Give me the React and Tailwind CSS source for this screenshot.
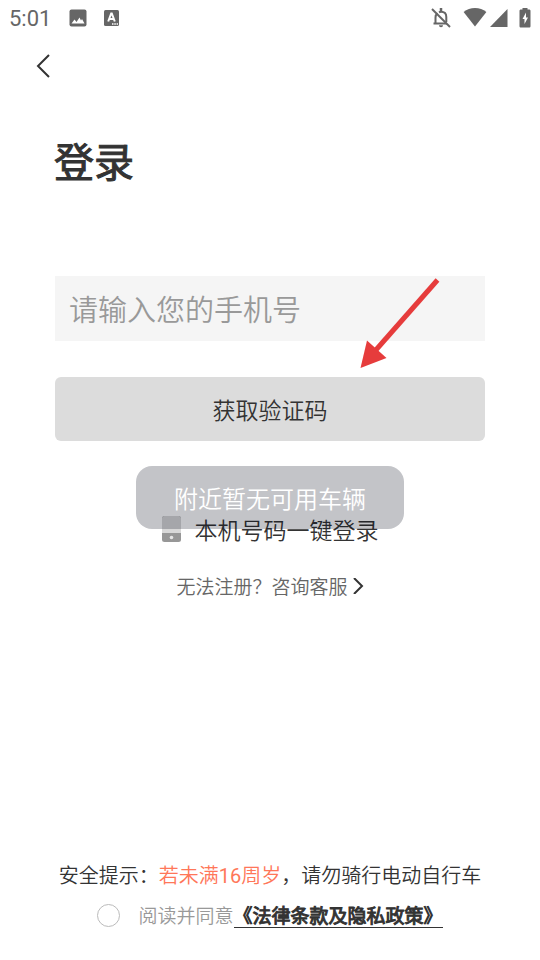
import { useState } from "react";

function StatusBar() {
  return (
    <div className="flex h-9 items-center justify-between px-[9px] text-[#666666]">
      <div className="flex items-center">
        <span className="w-[60px] pt-0.5 font-['Roboto',sans-serif] text-[22px] leading-6">5:01</span>
        <svg className="h-[18px] w-[18px]" viewBox="0 0 18 18" aria-hidden="true">
          <rect width="17" height="17" x=".5" y=".5" rx="2" fill="currentColor" />
          <path d="M2.500 14.500l3-4 2 2.500 3-4.500 1.500 3 1-1.500 2.500 4.500z" fill="#fff" />
        </svg>
        <svg className="ml-[17px] h-[18px] w-[15px]" viewBox="0 0 15 18" aria-hidden="true">
          <rect width="15" height="16" y="1" rx="1.500" fill="currentColor" />
          <path d="M4.200 12.500l3-8h.6l3 8M5.500 10h4" fill="none" stroke="#fff" strokeWidth="2" />
          <path d="M8 15h1.500M10.300 15h1.500M12.600 15H14" stroke="#fff" strokeWidth="1.400" />
        </svg>
      </div>
      <div className="flex items-center">
        <svg className="h-5 w-5" viewBox="0 0 20 20" fill="none" stroke="currentColor" aria-hidden="true">
          <path d="M4.500 15.200V9.500c0-2 .7-3.400 2-4.300M8 4.300c.5-.3 1.200-.5 2-.5 3.200 0 5.300 2 5.300 5.200v5M2.500 15.500h13.500" strokeWidth="2" />
          <path d="M10 0v4" strokeWidth="2.500" />
          <path d="M8 17.300h4c0 1.200-.8 2-2 2s-2-.8-2-2z" fill="currentColor" stroke="none" />
          <path d="M1 1l18 18" strokeWidth="2" />
        </svg>
        <svg className="ml-3 h-5 w-6" viewBox="0 0 24 20" fill="currentColor" aria-hidden="true">
          <path d="M.6 4C3.800 1.400 7.700 0 12 0s8.200 1.400 11.400 4L12 18.500z" />
        </svg>
        <svg className="ml-0.5 h-5 w-5" viewBox="0 0 20 20" fill="currentColor" aria-hidden="true">
          <path d="M18.500 1v18H1z" />
        </svg>
        <svg className="ml-2.5 h-5 w-3" viewBox="0 0 12 20" aria-hidden="true">
          <path d="M3.500 0h5v1.500H10c1 0 1.500.5 1.500 1.500v15c0 1-.5 1.500-1.500 1.500H2c-1 0-1.500-.5-1.500-1.500V3C.5 2 1 1.500 2 1.500h1.500z" fill="currentColor" />
          <path d="M7 4.500L3.500 11H5.500v5L9 9.500H7z" fill="#fff" />
        </svg>
      </div>
    </div>
  );
}

function Chevron({ className, d, viewBox }) {
  return (
    <svg className={className} viewBox={viewBox} fill="none" stroke="#333333" strokeWidth="2" aria-hidden="true">
      <path d={d} />
    </svg>
  );
}

function PhoneIcon() {
  return (
    <svg className="h-[26px] w-[19px]" viewBox="0 0 19 26" aria-hidden="true">
      <rect width="19" height="26" rx="2.500" fill="#979797" />
      <path d="M0 17V2.500C0 1 1 0 2.500 0h14C18 0 19 1 19 2.500V17z" fill="#d8d8d8" />
      <circle cx="9.500" cy="21.500" r="1.800" fill="#e5e5e5" />
    </svg>
  );
}

export default function App() {
  const [phone, setPhone] = useState("");
  const [agreed, setAgreed] = useState(false);

  const handleSubmit = (e) => {
    e.preventDefault();
  };

  return (
    <div className="flex min-h-screen flex-col bg-white font-['Noto_Sans_CJK_SC',sans-serif] text-[#333333]">
      <StatusBar />

      <header className="flex h-[60px] items-center px-[27px]">
        <button type="button" aria-label="返回" className="flex h-8 w-8 items-center justify-center">
          <Chevron className="h-6 w-4" viewBox="0 0 16 24" d="M14 1L3 12l11 11" />
        </button>
      </header>

      <main className="px-[55px] pt-[34px] font-[350]">
        <h1 className="-ml-px text-[40px] font-normal leading-[60px] [-webkit-text-stroke:1px]">登录</h1>

        <form onSubmit={handleSubmit} className="relative pt-[86px]">
          <input
            type="tel"
            aria-label="手机号"
            placeholder="请输入您的手机号"
            value={phone}
            onChange={(e) => setPhone(e.target.value)}
            className="block h-[65px] w-full bg-[#f5f5f5] px-3.5 pb-0.5 text-[29px] outline-none placeholder:text-[#999999]"
          />
          <button type="submit" className="mt-9 block h-16 w-full rounded-md bg-[#dcdcdc] text-[23px]">
            获取验证码
          </button>

          {/* pointer to the submit button */}
          <svg
            className="pointer-events-none absolute right-11 top-[88px] h-[90px] w-[82px]"
            viewBox="0 0 82 90"
            aria-hidden="true"
          >
            <path d="M78.500 2L16 73" stroke="#e63c3c" strokeWidth="5" />
            <path d="M1.500 90L8 62.500l19.500 17.500z" fill="#e63c3c" />
          </svg>
        </form>

        <div className="relative flex flex-col items-center pt-[71px]">
          <button type="button" className="flex items-center gap-3.5 text-[23px] leading-[34px]">
            <PhoneIcon />
            本机号码一键登录
          </button>
          <a href="#service" className="mt-[26px] flex items-center gap-1 text-[19px] leading-7 text-[#666666]">
            无法注册？咨询客服
            <Chevron className="h-4 w-3" viewBox="0 0 12 16" d="M2 0l8 8-8 8" />
          </a>

          {/* toast */}
          <div
            role="status"
            className="absolute top-[25px] flex h-[63px] items-center rounded-2xl bg-[#060a1a]/24 px-[38px] text-2xl text-white"
          >
            附近暂无可用车辆
          </div>
        </div>
      </main>

      <footer className="mt-auto flex flex-col items-center pb-[31px] font-[350]">
        <p className="text-xl leading-[30px]">
          安全提示：
          <span className="text-[#ff7759]">
            若未满<span className="font-['Roboto',sans-serif] font-normal">16</span>周岁
          </span>
          ，请勿骑行电动自行车
        </p>
        <div className="mt-2.5 flex items-center text-[19px] leading-7">
          <input
            id="agree"
            type="checkbox"
            checked={agreed}
            onChange={(e) => setAgreed(e.target.checked)}
            className="mr-[18px] h-[23px] w-[23px] appearance-none rounded-full border border-[#bbbbbb] checked:bg-[#ff7759]"
          />
          <label htmlFor="agree" className="text-[#999999]">
            阅读并同意
          </label>
          <a href="#terms" className="border-b border-[#333333] font-normal leading-6 [-webkit-text-stroke:1px]">
            《法律条款及隐私政策》
          </a>
        </div>
      </footer>
    </div>
  );
}
